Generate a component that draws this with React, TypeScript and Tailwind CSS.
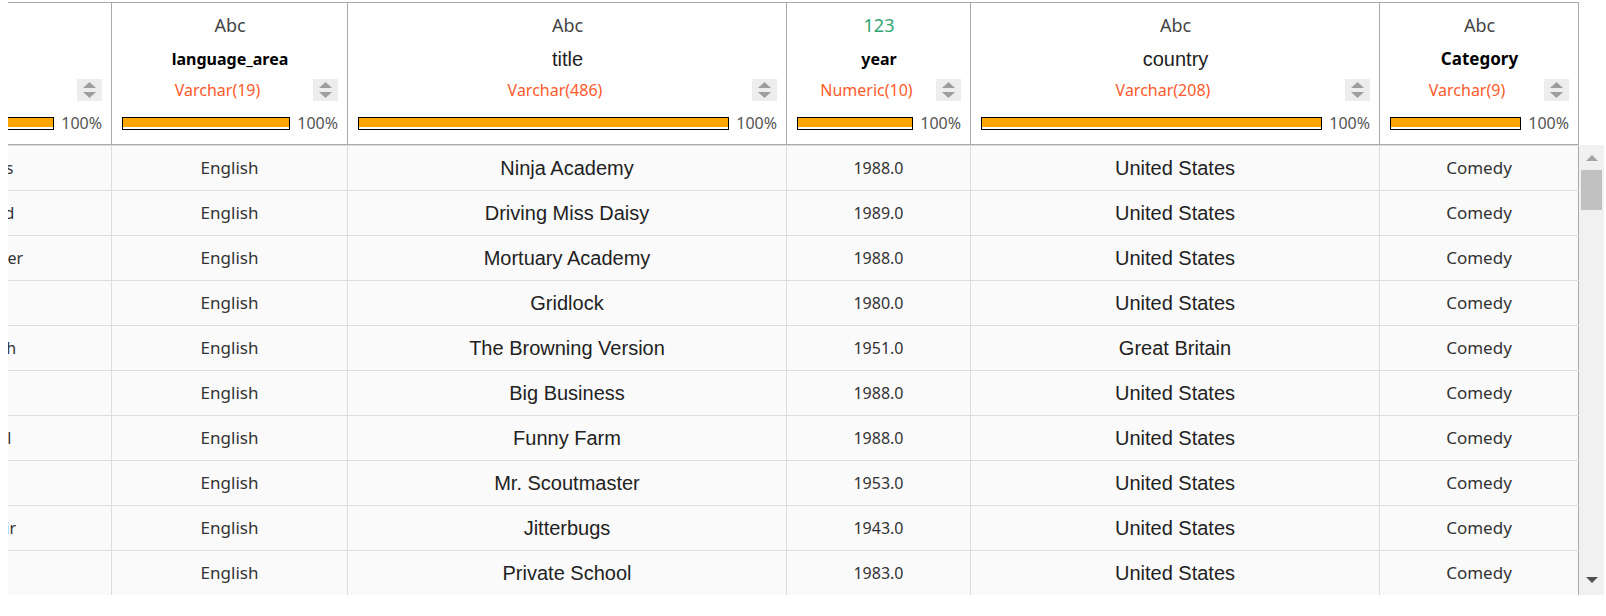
import clsx from "clsx";

type Col = {
  key: string;
  kind: string;
  name: string;
  type: string;
  numeric?: boolean;
  nameClass: string;
  cellClass: string;
};

const columns: Col[] = [
  {
    key: "director",
    kind: "Abc",
    name: "director",
    type: "Varchar(412)",
    nameClass: "font-bold text-[16px] text-black",
    cellClass: "text-[16px] text-[#333]",
  },
  {
    key: "language_area",
    kind: "Abc",
    name: "language_area",
    type: "Varchar(19)",
    nameClass: "font-bold text-[16px] text-black",
    cellClass: "text-[17px] text-[#333]",
  },
  {
    key: "title",
    kind: "Abc",
    name: "title",
    type: "Varchar(486)",
    nameClass: "font-['Liberation_Sans',Arial,sans-serif] text-[20px] text-[#222]",
    cellClass: "font-['Liberation_Sans',Arial,sans-serif] text-[20px] text-[#222]",
  },
  {
    key: "year",
    kind: "123",
    name: "year",
    type: "Numeric(10)",
    numeric: true,
    nameClass: "font-bold text-[16px] text-black",
    cellClass: "text-[16px] text-[#333]",
  },
  {
    key: "country",
    kind: "Abc",
    name: "country",
    type: "Varchar(208)",
    nameClass: "font-['Liberation_Sans',Arial,sans-serif] text-[20px] text-[#222]",
    cellClass: "font-['Liberation_Sans',Arial,sans-serif] text-[20px] text-[#222]",
  },
  {
    key: "Category",
    kind: "Abc",
    name: "Category",
    type: "Varchar(9)",
    nameClass: "font-bold text-[17px] text-black",
    cellClass: "text-[17px] text-[#333]",
  },
];

// the table is scrolled sideways, so only the tail of the director column shows
const rows: Record<string, string>[] = [
  ["Nico Mastorakis", "English", "Ninja Academy", "1988.0", "United States", "Comedy"],
  ["Bruce Beresford", "English", "Driving Miss Daisy", "1989.0", "United States", "Comedy"],
  ["Michael Schroeder", "English", "Mortuary Academy", "1988.0", "United States", "Comedy"],
  ["James Frawley", "English", "Gridlock", "1980.0", "United States", "Comedy"],
  ["Anthony Asquith", "English", "The Browning Version", "1951.0", "Great Britain", "Comedy"],
  ["Jim Abrahams", "English", "Big Business", "1988.0", "United States", "Comedy"],
  ["George Roy Hill", "English", "Funny Farm", "1988.0", "United States", "Comedy"],
  ["Henry Levin", "English", "Mr. Scoutmaster", "1953.0", "United States", "Comedy"],
  ["Malcolm St. Clair", "English", "Jitterbugs", "1943.0", "United States", "Comedy"],
  ["Noel Black", "English", "Private School", "1983.0", "United States", "Comedy"],
].map((r) => Object.fromEntries(columns.map((c, i) => [c.key, r[i]])));

const gridCols = "grid grid-cols-[103px_236px_439px_184px_409px_200px]";

function SortButton() {
  return (
    <div className="flex h-[22px] w-[25px] shrink-0 flex-col items-center justify-center gap-[4px] bg-[#ededed]">
      <svg width="13" height="6" viewBox="0 0 13 6">
        <path d="M6.5 0 L13 6 L0 6 Z" fill="#9e9e9e" />
      </svg>
      <svg width="13" height="6" viewBox="0 0 13 6">
        <path d="M0 0 L13 0 L6.5 6 Z" fill="#9e9e9e" />
      </svg>
    </div>
  );
}

function HeaderCell({ col, index }: { col: Col; index: number }) {
  const first = index === 0;
  const last = index === columns.length - 1;
  return (
    <div
      className={clsx(
        "overflow-hidden",
        !first && "border-l border-[#aaa]",
        last && "border-r border-[#aaa]"
      )}
    >
      <div
        className={clsx(
          "flex flex-col pt-[10px] pb-[11px] pl-[10px] pr-[9px]",
          first && "ml-[-212px] w-[315px]"
        )}
      >
        <div
          className={clsx(
            "h-6 text-center text-[18px] leading-6",
            col.numeric ? "text-[16px] text-[#2fa572]" : "text-[#444]"
          )}
        >
          {col.kind}
        </div>
        <div className={clsx("mt-[10px] h-6 text-center leading-6", col.nameClass)}>
          {col.name}
        </div>
        <div className="mt-2 flex h-[22px] items-center">
          <span className="flex-1 text-center text-[16px] leading-[22px] text-[#ff5a2a]">
            {col.type}
          </span>
          <SortButton />
        </div>
        <div className="mt-3 flex h-5 items-center gap-[7px]">
          <div className="h-[13px] flex-1 border border-black bg-white">
            <div className="h-[9px] w-full bg-[#ffa500]" />
          </div>
          <span className="text-[16px] leading-5 text-[#555]">100%</span>
        </div>
      </div>
    </div>
  );
}

function Scrollbar() {
  return (
    <div className="flex h-[450px] w-[25px] flex-col items-center bg-[#f1f1f1]">
      <svg className="mt-[10px]" width="12" height="6" viewBox="0 0 12 6">
        <path d="M6 0 L12 6 L0 6 Z" fill="#a3a3a3" />
      </svg>
      <div className="mt-[9px] h-[40px] w-[21px] bg-[#c1c1c1]" />
      <div className="flex-1" />
      <svg className="mb-[12px]" width="12" height="6" viewBox="0 0 12 6">
        <path d="M0 0 L12 0 L6 6 Z" fill="#505050" />
      </svg>
    </div>
  );
}

export default function App() {
  return (
    <div className="h-[616px] w-[1606px] overflow-hidden bg-white pl-2 pt-[2px] font-['Noto_Sans',sans-serif]">
      <div className={clsx(gridCols, "w-[1571px] border-y border-[#aaa]")}>
        {columns.map((c, i) => (
          <HeaderCell key={c.key} col={c} index={i} />
        ))}
      </div>
      <div className="flex">
        <div className="h-[450px] w-[1571px] overflow-hidden border-t border-[#ddd] bg-[#fafafa]">
          {rows.map((r, ri) => (
            <div key={ri} className={clsx(gridCols, "h-[45px] border-b border-[#ddd]")}>
              {columns.map((c, i) => (
                <div
                  key={c.key}
                  className={clsx(
                    "flex items-center overflow-hidden whitespace-nowrap",
                    i > 0 && "border-l border-[#ddd]",
                    i === columns.length - 1 && "border-r border-r-[#aaa]"
                  )}
                >
                  <div
                    className={clsx(
                      "text-center",
                      i === 0 ? "ml-[-212px] w-[315px] shrink-0" : "w-full",
                      c.cellClass
                    )}
                  >
                    {r[c.key]}
                  </div>
                </div>
              ))}
            </div>
          ))}
        </div>
        <Scrollbar />
      </div>
    </div>
  );
}
